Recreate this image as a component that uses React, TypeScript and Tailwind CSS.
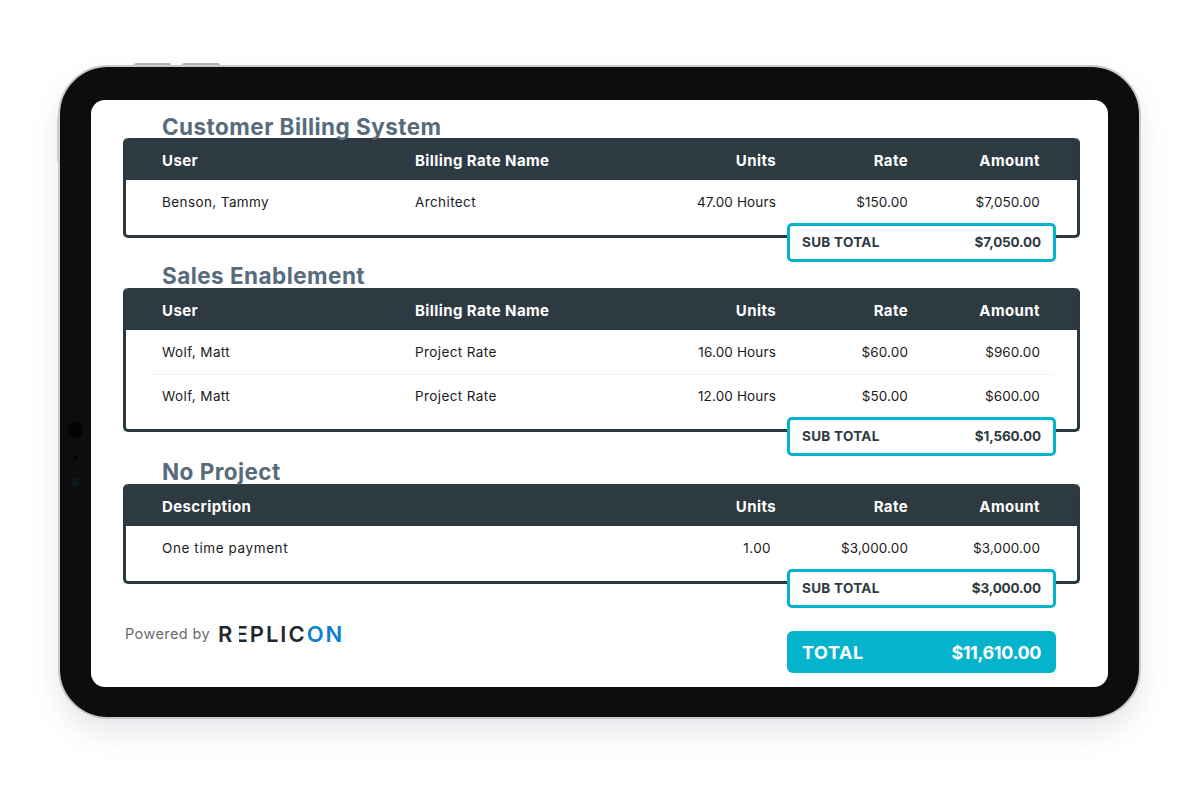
const billingColumns = "grid grid-cols-[253px_200px_161px_132px_132px]";
const descriptionColumns = "grid grid-cols-[484px_130px_132px_132px]";

interface Section {
  title: string;
  total: string;
  rows: string[][];
}

const sections: Section[] = [
  {
    title: "Customer Billing System",
    total: "$7,050.00",
    rows: [["Benson, Tammy", "Architect", "47.00 Hours", "$150.00", "$7,050.00"]],
  },
  {
    title: "Sales Enablement",
    total: "$1,560.00",
    rows: [
      ["Wolf, Matt", "Project Rate", "16.00 Hours", "$60.00", "$960.00"],
      ["Wolf, Matt", "Project Rate", "12.00 Hours", "$50.00", "$600.00"],
    ],
  },
];

const BillingTable = ({ section }: { section: Section }) => (
  <div className="rounded-[5px] border-x-[3px] border-b-[3px] border-[#2b3840] bg-white">
    <div className={`${billingColumns} h-[42px] items-center rounded-t-[3px] bg-[#2e3a42] pl-[36px] pt-[4px] text-[15px] font-bold tracking-[0.4px] text-white`}>
      <div>User</div>
      <div>Billing Rate Name</div>
      <div className="text-right">Units</div>
      <div className="text-right">Rate</div>
      <div className="text-right">Amount</div>
    </div>
    <div className="pb-[11px]">
      {section.rows.map((row, i) => (
        <div key={i} className={i > 0 ? "mx-[24px] border-t border-[#f1f1f1]" : "mx-[24px] border-t border-transparent"}>
          <div className={`${billingColumns} h-[43px] items-center pl-[12px] text-[13.5px] tracking-[0.4px] text-[#1b1b1b]`}>
            <div>{row[0]}</div>
            <div>{row[1]}</div>
            <div className="text-right tracking-[0.15px]">{row[2]}</div>
            <div className="text-right tracking-[0.1px]">{row[3]}</div>
            <div className="text-right tracking-[0.1px]">{row[4]}</div>
          </div>
        </div>
      ))}
    </div>
  </div>
);

const SubTotal = ({ value }: { value: string }) => (
  <div className="relative -mt-[15px] mr-[24px] flex justify-end">
    <div className="flex h-[39px] w-[269px] items-center justify-between rounded-[5px] border-[3px] border-[#05b3cc] bg-white px-[12px] text-[13.5px] font-bold tracking-[0.3px] text-[#2e3a42]">
      <span>SUB TOTAL</span>
      <span className="tracking-[-0.15px]">{value}</span>
    </div>
  </div>
);

const Heading = ({ children, className = "" }: { children: string; className?: string }) => (
  <h2 className={`h-[24px] pl-[39px] text-[22.5px] font-bold leading-[24px] tracking-[0.45px] text-[#566b7c] ${className}`}>{children}</h2>
);

const Logo = () => (
  <div className="text-[22px] font-semibold leading-none tracking-[2px] text-[#22282c]">
    R
    <span className="relative inline-block">
      E
      <span className="absolute left-[1px] top-0 h-full w-[4px] bg-white" />
    </span>
    PLIC<span className="text-[#0b7fd1]">ON</span>
  </div>
);

export default function App() {
  return (
    <div className="h-[785px] w-[1200px] overflow-hidden bg-white pl-[58px] pt-[65px] font-['Inter','Liberation_Sans',sans-serif]">
      <div className="relative h-[654px] w-[1083px] rounded-[50px] border-2 border-[#c9c9c9] bg-[#0d0d0d] pl-[31px] pt-[33px] shadow-[0_14px_28px_rgba(70,90,110,0.14)]">
        {/* hardware buttons */}
        <div className="absolute -top-[4px] left-[74px] h-[2px] w-[37px] rounded-t bg-[#b5b5b5]" />
        <div className="absolute -top-[4px] left-[122px] h-[2px] w-[38px] rounded-t bg-[#b5b5b5]" />
        <div className="absolute -left-[3px] top-[50px] h-[45px] w-[1.5px] bg-[#cfcfcf]" />
        {/* cameras */}
        <div className="absolute left-[7px] top-[355px] h-[16px] w-[16px] rounded-full bg-[#040404]" />
        <div className="absolute left-[13px] top-[389px] h-[4px] w-[4px] rounded-full bg-[#030303]" />
        <div className="absolute left-[11px] top-[411px] h-[8px] w-[8px] rounded-full bg-[#0c1a20]" />

        <div className="h-[587px] w-[1017px] overflow-hidden rounded-[14px] bg-white pl-[32px] pr-[28px] pt-[14px]">
          {sections.map((section, i) => (
            <div key={section.title}>
              <Heading className={i > 0 ? "mt-[2px]" : "-mb-[1px] mt-[1px]"}>{section.title}</Heading>
              <BillingTable section={section} />
              <SubTotal value={section.total} />
            </div>
          ))}

          <Heading className="mt-[4px]">No Project</Heading>
          <div className="rounded-[5px] border-x-[3px] border-b-[3px] border-[#2b3840] bg-white">
            <div className={`${descriptionColumns} h-[42px] items-center rounded-t-[3px] bg-[#2e3a42] pl-[36px] pt-[4px] text-[15px] font-bold tracking-[0.4px] text-white`}>
              <div>Description</div>
              <div className="text-right">Units</div>
              <div className="text-right">Rate</div>
              <div className="text-right">Amount</div>
            </div>
            <div className={`${descriptionColumns} h-[44px] items-center pl-[36px] text-[13.5px] tracking-[0.4px] text-[#1b1b1b]`}>
              <div className="tracking-[0.6px]">One time payment</div>
              <div className="pr-[5px] text-right">1.00</div>
              <div className="text-right tracking-[0.1px]">$3,000.00</div>
              <div className="text-right tracking-[0.1px]">$3,000.00</div>
            </div>
            <div className="h-[11px]" />
          </div>
          <SubTotal value="$3,000.00" />

          <div className="mr-[24px] mt-[23px] flex items-start justify-between">
            <div className="mt-[-8px] flex items-center pl-[2px]">
              <span className="mr-[8px] text-[14.5px] tracking-[0.4px] text-[#6b6b6b]">Powered by</span>
              <Logo />
            </div>
            <div className="flex h-[42px] w-[269px] items-center justify-between rounded-[6px] bg-[#05b3cc] px-[15px] text-[18px] font-bold text-white">
              <span className="tracking-[0.6px]">TOTAL</span>
              <span className="tracking-[-0.4px]">$11,610.00</span>
            </div>
          </div>
        </div>
      </div>
    </div>
  );
}
